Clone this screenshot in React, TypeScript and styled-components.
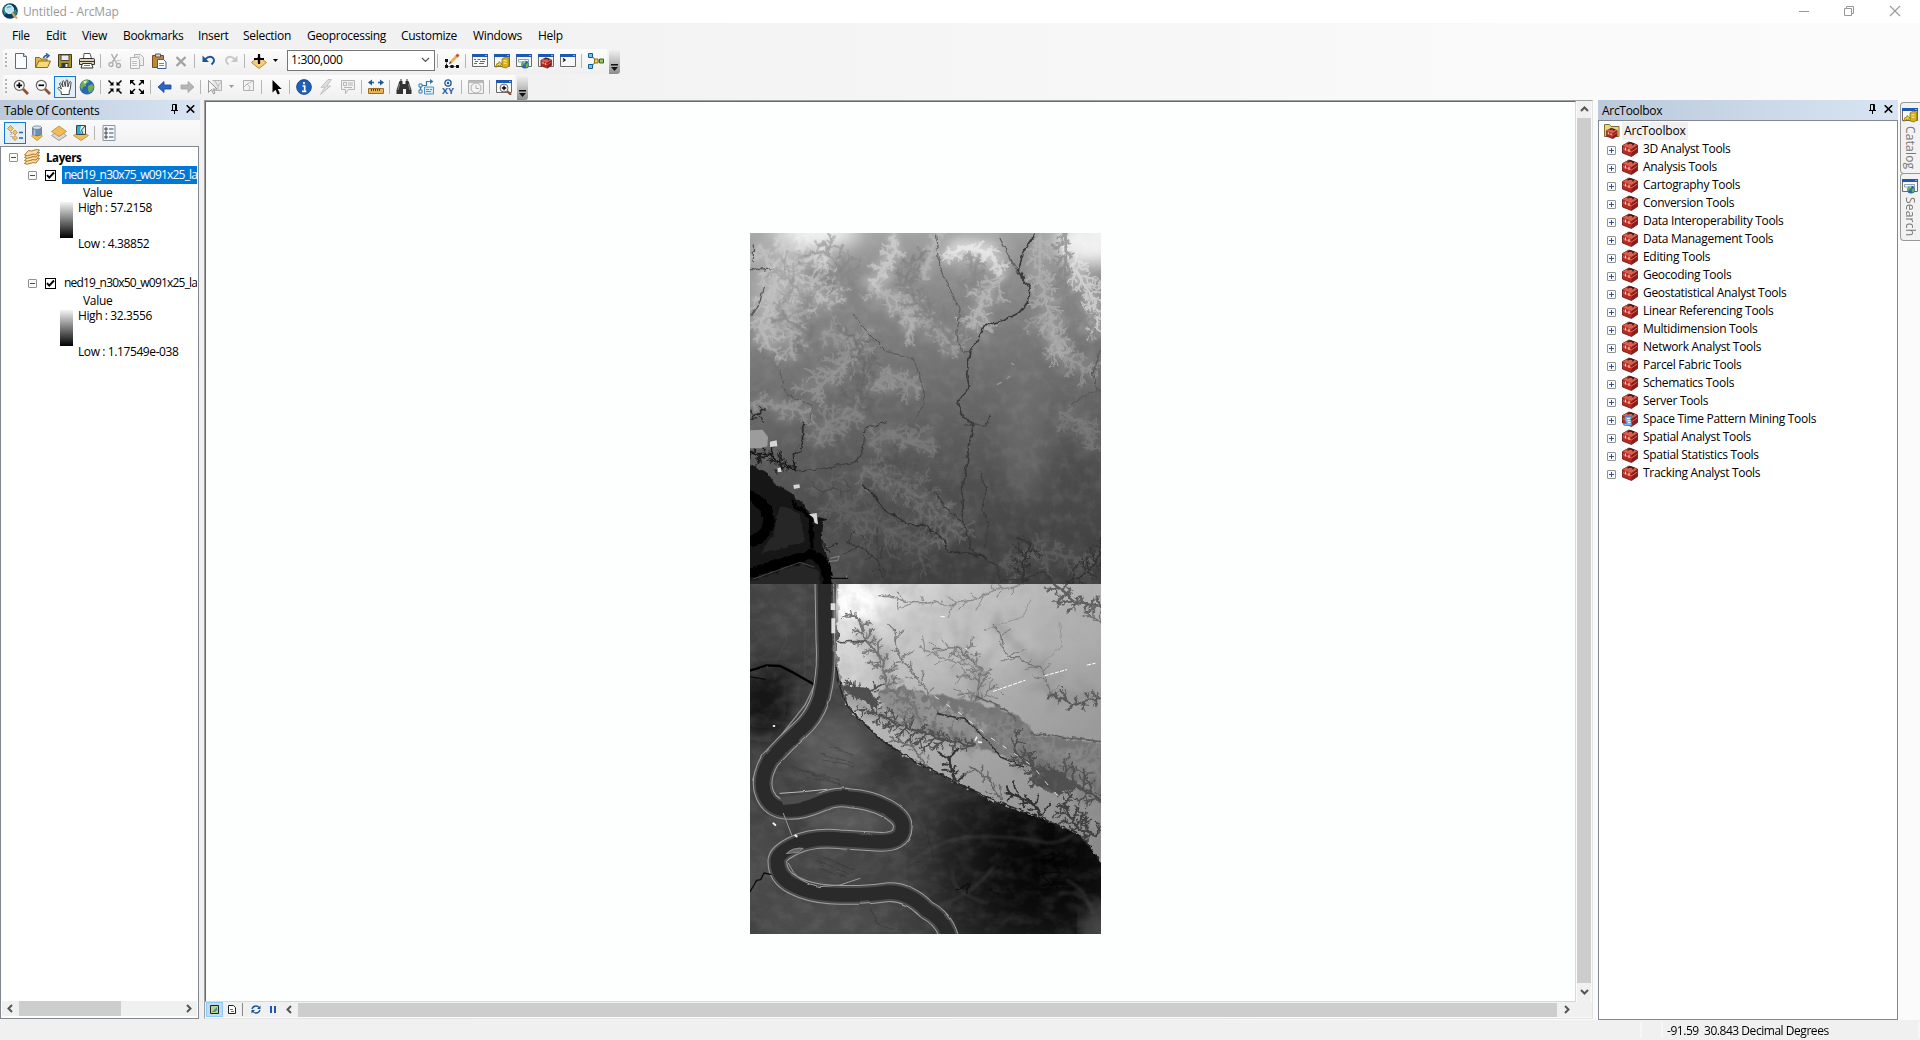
import React from "react";
import styled, { createGlobalStyle, css } from "styled-components";

const GlobalStyle = createGlobalStyle`
  html, body { margin: 0; padding: 0; }
  body { overflow: hidden; }
  * { box-sizing: border-box; }
  svg { display: block; flex: none; }
`;

const Window = styled.div`
  width: 1920px;
  height: 1040px;
  display: flex;
  flex-direction: column;
  background: linear-gradient(90deg, #f0f0f0 0, #f1f1f1 400px, #fafafa 1550px, #fbfbfb 100%);
  font-family: "Open Sans", "Noto Sans", sans-serif;
  font-size: 12px;
  letter-spacing: -0.3px;
  color: #000;
  white-space: pre;
  user-select: none;
`;

/* ---------- title bar and menu ---------- */

const TitleBar = styled.header`
  height: 23px;
  flex: none;
  display: flex;
  align-items: center;
  background: #fff;
  color: #999;
  padding: 0 15px 2px 2px;
`;
const TitleText = styled.span`
  flex: 1;
  padding: 1px 0 0 5px;
  letter-spacing: -0.13px;
`;
const WindowButtons = styled.div`
  display: flex;
  gap: 30px;
`;
const MenuBar = styled.nav`
  height: 26px;
  flex: none;
  display: flex;
  align-items: center;
  padding-left: 12px;
`;
const MenuItem = styled.span<{ $w: number }>`
  width: ${(p) => p.$w}px;
  line-height: 26px;
`;

/* ---------- toolbars ---------- */

const ToolbarRow = styled.div`
  height: 25px;
  flex: none;
  margin-bottom: 1px;
  display: flex;
  & + & { margin-bottom: 0; }
`;
const Toolbar = styled.div`
  display: flex;
  align-items: center;
  margin-left: 3px;
  padding-bottom: 2px;
  background: linear-gradient(180deg, #fcfcfc, #f3f3f3 70%, #efefef);
  border-radius: 3px 0 0 3px;
`;
const Grip = styled.i`
  width: 2px;
  height: 16px;
  margin: 0 3px 0 2px;
  background: repeating-linear-gradient(180deg, #b4b4b4 0 2px, transparent 2px 4px);
`;
const ToolButton = styled.span<{ $on?: boolean; $w?: number }>`
  width: ${(p) => p.$w ?? 22}px;
  height: 22px;
  display: flex;
  align-items: center;
  justify-content: center;
  ${(p) => p.$on && css`
    background: #e2eefa;
    border: 1px solid #0f7bd7;
  `}
`;
const Separator = styled.i`
  width: 6px;
  height: 14px;
  background: linear-gradient(#b5b5b5, #b5b5b5) 2px 0 / 1px 100% no-repeat;
`;
const Combo = styled.div`
  width: 148px;
  height: 21px;
  margin: -1px 0 0 7px;
  border: 1px solid #767676;
  background: #fff;
  display: flex;
  align-items: center;
  justify-content: space-between;
  padding: 0 4px 1px 3px;
`;
const Overflow = styled.span`
  width: 11px;
  height: 24px;
  margin: 1px 0 0 2px;
  display: flex;
  align-items: flex-end;
  justify-content: center;
  padding-bottom: 3px;
  background: linear-gradient(180deg, #f0f0f0, #c4c4c4 45%, #8c8c8c);
  border-radius: 0 0 3px 0;
`;

/* ---------- panels ---------- */

const Workspace = styled.main`
  flex: 1;
  min-height: 0;
  display: flex;
`;
const TocPanel = styled.section`
  width: 200px;
  display: flex;
  flex-direction: column;
`;
const PanelHeader = styled.div`
  height: 20px;
  flex: none;
  display: flex;
  align-items: center;
  gap: 8px;
  padding: 0 5px 2px 4px;
  background: linear-gradient(90deg, #bacadb, #d8e4f2);
`;
const PanelTitle = styled.span`
  flex: 1;
  padding-top: 3px;
`;
const TocTools = styled.div`
  height: 26px;
  flex: none;
  display: flex;
  align-items: center;
  padding-left: 4px;
  background: linear-gradient(180deg, #fafafa, #f0f0f0);
`;
const TocBox = styled.div`
  width: 199px;
  height: 873px;
  border: 1px solid #828790;
  background: #fff;
  display: flex;
  flex-direction: column;
  padding: 1px;
`;
const TocTree = styled.div`
  flex: 1;
  overflow: hidden;
`;
const TocRow = styled.div<{ $indent: number }>`
  height: 18px;
  display: flex;
  align-items: center;
  padding-left: ${(p) => p.$indent}px;
`;
const ExpandBox = styled.span`
  width: 9px;
  height: 9px;
  flex: none;
  border: 1px solid #919191;
  border-radius: 1px;
  background: #fafafa;
  display: flex;
`;
const LayersLabel = styled.b`
  padding-left: 1px;
  font-size: 11.5px;
  letter-spacing: -0.4px;
`;
const CheckBox = styled.span`
  width: 11px;
  height: 11px;
  flex: none;
  margin: 1px 6px 0 8px;
  border: 1px solid #000;
  background: #fff;
`;
const LayerName = styled.span<{ $selected?: boolean }>`
  flex: 1;
  height: 18px;
  line-height: 17px;
  padding-left: 2px;
  letter-spacing: -0.8px;
  color: ${(p) => (p.$selected ? "#fff" : "#000")};
  background: ${(p) => (p.$selected ? "#0078d7" : "transparent")};
`;
const LayerGroup = styled.div`
  height: 108px;
`;
const ValueLabel = styled.div`
  height: 17px;
  line-height: 17px;
  padding-left: 81px;
`;
const RampRow = styled.div`
  display: flex;
  gap: 5px;
  padding: 1px 0 0 58px;
`;
const Ramp = styled.span`
  width: 13px;
  height: 36px;
  background: linear-gradient(180deg, #f4f4f4, #000);
`;
const RampLabels = styled.div`
  height: 50px;
  display: flex;
  flex-direction: column;
  justify-content: space-between;
  line-height: 14px;
  margin-top: -1px;
  letter-spacing: -0.4px;
`;

/* ---------- scroll bars ---------- */

const ScrollH = styled.div<{ $h: number }>`
  height: ${(p) => p.$h}px;
  flex: none;
  display: flex;
  align-items: center;
  background: #f0f0f0;
  margin-bottom: 1px;
`;
const ScrollV = styled.div`
  width: 14px;
  display: flex;
  flex-direction: column;
  align-items: center;
  background: #f0f0f0;
`;
const Thumb = styled.span<{ $w?: number; $h?: number }>`
  width: ${(p) => (p.$w ? p.$w + "px" : "100%")};
  height: ${(p) => (p.$h ? p.$h + "px" : "100%")};
  background: #cdcdcd;
`;
const ScrollArrow = styled.span<{ $w: number; $h: number }>`
  width: ${(p) => p.$w}px;
  height: ${(p) => p.$h}px;
  flex: none;
  display: flex;
  align-items: center;
  justify-content: center;
`;
const Filler = styled.span`
  flex: 1;
`;

/* ---------- map view ---------- */

const MapFrame = styled.section`
  width: 1389px;
  height: 919px;
  margin-left: 4px;
  display: flex;
  flex-direction: column;
  border-left: 1px solid #a0a0a0;
  border-top: 1px solid #a0a0a0;
  border-right: 1px solid #e3e3e3;
  border-bottom: 1px solid #e3e3e3;
  background: #fbfbfb;
`;
const MapRow = styled.div`
  height: 901px;
  display: flex;
  gap: 1px;
`;
const MapCanvas = styled.div`
  width: 1371px;
  height: 901px;
  background: #fdfefe;
  border: 1px solid #696969;
  border-right-color: #d8d8d8;
  border-bottom-color: #d8d8d8;
  padding: 131px 0 0 544px;
`;
const MapFooter = styled.div`
  height: 15px;
  display: flex;
  align-items: center;
  background: #f0f0f0;
  padding-left: 1px;
`;
const ViewButton = styled.span<{ $on?: boolean }>`
  width: 17px;
  height: 15px;
  display: flex;
  align-items: center;
  justify-content: center;
  background: ${(p) => (p.$on ? "#bcdcf4" : "transparent")};
  border: 1px solid ${(p) => (p.$on ? "#90c8f6" : "transparent")};
`;
const FooterRule = styled.i`
  width: 1px;
  height: 13px;
  margin: 0 4px 0 2px;
  background: #888;
`;

/* ---------- ArcToolbox ---------- */

const ToolboxPanel = styled.section`
  width: 300px;
  height: 920px;
  margin-left: 5px;
  display: flex;
  flex-direction: column;
`;
const ToolboxTree = styled.div`
  flex: 1;
  border: 1px solid #828790;
  background: #fff;
  padding: 1px 0 0 5px;
`;
const ToolboxRoot = styled.div`
  height: 18px;
  display: flex;
  align-items: center;
  gap: 2px;
`;
const RootLabel = styled.span`
  height: 18px;
  line-height: 18px;
  padding: 0 2px;
  background: #f0f0f0;
  letter-spacing: -0.15px;
`;
const ToolRow = styled.div`
  height: 18px;
  display: flex;
  align-items: center;
  padding-left: 3px;
  & > ${ExpandBox} { margin: 3px 6px 0 0; }
`;
const ToolName = styled.span`
  padding-left: 5px;
  line-height: 18px;
`;

const DockStrip = styled.aside`
  width: 20px;
  margin-left: 2px;
  padding-top: 2px;
  display: flex;
  flex-direction: column;
`;
const DockTab = styled.div<{ $h: number }>`
  height: ${(p) => p.$h}px;
  border: 1px solid #999;
  border-right: 0;
  border-radius: 4px 0 0 4px;
  margin-bottom: -1px;
  background: #f2f2f2;
  display: flex;
  flex-direction: column;
  align-items: center;
  padding: 4px 2px 0 0;
  gap: 3px;
  color: #777;
`;
const DockLabel = styled.span`
  writing-mode: vertical-rl;
  line-height: 16px;
  letter-spacing: 0.2px;
`;

const StatusBar = styled.footer`
  height: 20px;
  flex: none;
  display: flex;
  align-items: stretch;
  background: #f0f0f0;
  padding: 2px 0;
`;
const StatusCell = styled.div<{ $w: number }>`
  width: ${(p) => p.$w}px;
  border-right: 2px solid #f7f7f7;
  line-height: 17px;
  padding-left: 4px;
  letter-spacing: -0.46px;
`;

/* ---------- icons ---------- */

const Icon = ({ size = 16, children }: { size?: number; children: React.ReactNode }) => (
  <svg width={size} height={size} viewBox="0 0 16 16" fill="none">{children}</svg>
);

const GlobeArt = () => (
  <>
    <circle cx="8" cy="8" r="7.4" fill="#2b66b5" />
    <path d="M2 5Q5 0 9 1L10 3 7 5 7 7 4 8 3 11Q0 8 2 5M9 7l4-2 2 3-2 4-3 2-1-4z" fill="#6fb04a" />
    <path d="M4 3Q6 1 8 2L6 5z" fill="#d9efb0" />
  </>
);
const LogoIcon = () => (
  <Icon>
    <circle cx="8" cy="8" r="7.8" fill="#0c3a5e" />
    <path d="M1 6Q3 1 8 1l2 3-5 2-1 5-2 1M10 9l4-3 1 4-4 5z" fill="#2b8a80" />
    <circle cx="7.4" cy="6.4" r="4.2" fill="#b9e4f2" stroke="#e8f6fb" />
    <path d="M5 5q2-2 4-1" stroke="#4fa6cc" strokeWidth="1.5" />
    <path d="M10 10l5 5.5" stroke="#d9a35e" strokeWidth="2" />
  </Icon>
);
const NewIcon = () => (
  <Icon>
    <path d="M2.500.5h8l3 3v12h-11z" fill="#fbfdff" stroke="#5f6b78" />
    <path d="M10.500.500v3h3" fill="#cfdcec" stroke="#5f6b78" />
  </Icon>
);
const OpenIcon = () => (
  <Icon>
    <path d="M.5 14.500v-10h4l1.500 1.500h6v3" fill="#e0b74a" stroke="#8a6a1d" />
    <path d="M.8 14.500l3-6.500h11.700l-3 6.500z" fill="#f8d978" stroke="#8a6a1d" />
    <path d="M8.500 5q1-3 4-2.500M11 .5l3 2-2.500 2.500" stroke="#1c5ea8" strokeWidth="1.500" />
  </Icon>
);
const SaveIcon = () => (
  <Icon>
    <path d="M1.500 1.500h13v13h-12l-1-1z" fill="#a8922c" stroke="#3c3823" />
    <path d="M4 2h8v5.500H4z" fill="#e8ecef" stroke="#4a4a3a" />
    <path d="M4.500 10h7v4.500h-7z" fill="#35383c" />
    <path d="M8.500 11h2v3h-2z" fill="#eee" />
  </Icon>
);
const PrintIcon = () => (
  <Icon>
    <path d="M4.500 5.500l.5-5h6l1.500 5z" fill="#fff" stroke="#555" />
    <path d="M.5 6.500q0-1 1-1h13q1 0 1 1v5h-15z" fill="#d8d2b8" stroke="#333" />
    <path d="M1 8.500h14" stroke="#333" />
    <path d="M3.500 10.500h9l1.500 4.500h-12z" fill="#fff" stroke="#333" />
    <path d="M5 12.500h6" stroke="#777" />
  </Icon>
);
const CutIcon = () => (
  <Icon>
    <path d="M4.500 1l5 9.500M10.500 1l-5 8" stroke="#b0b0b0" strokeWidth="1.500" />
    <circle cx="4" cy="11.500" r="2" stroke="#aaa" strokeWidth="1.300" />
    <circle cx="11.500" cy="12.500" r="2" stroke="#aaa" strokeWidth="1.300" />
    <path d="M8 8.500l6-1.500" stroke="#c4c4c4" />
  </Icon>
);
const CopyIcon = () => (
  <Icon>
    <path d="M5.500 1.500h6l3 3v8h-9z" fill="#efefef" stroke="#b0b0b0" />
    <path d="M1.500 4.500h7l2 2v9h-9z" fill="#f4f4f4" stroke="#b0b0b0" />
    <path d="M3 8.500h5M3 10.500h5M3 12.500h5M7 4h4" stroke="#c0c0c0" />
  </Icon>
);
const PasteIcon = () => (
  <Icon>
    <path d="M1.500 2.500h11v12h-11z" fill="#c4843a" stroke="#7c4b1c" />
    <path d="M4.500 1h5v3h-5z" fill="#d8d8d8" stroke="#555" />
    <path d="M6.500 6.500h6l2.500 2.500v6.500H6.500z" fill="#fff" stroke="#3c5f8e" />
    <path d="M8 10.500h5M8 12.500h5" stroke="#5e8cc4" />
  </Icon>
);
const DeleteIcon = () => (
  <Icon><path d="M3.500 4l9 9M12.500 4l-9 9" stroke="#a2a2a2" strokeWidth="2.400" /></Icon>
);
const UndoArt = ({ color }: { color: string }) => (
  <>
    <path d="M4 6.500Q8 2.500 11.500 4.500Q15 7.500 10.500 11.500" stroke={color} strokeWidth="1.900" />
    <path d="M1.500 2.500v6.500H8z" fill={color} />
  </>
);
const UndoIcon = () => <Icon><UndoArt color="#1a559c" /></Icon>;
const RedoIcon = () => <Icon><g transform="matrix(-1 0 0 1 16 0)"><UndoArt color="#c8c8c8" /></g></Icon>;
const AddDataIcon = () => (
  <Icon>
    <path d="M8 3.500l7.500 6L8 15.500.5 9.500z" fill="#f3cd7a" stroke="#b98a3a" />
    <path d="M8 1v10M3 6h10" stroke="#000" strokeWidth="2.200" />
  </Icon>
);
const Caret = ({ color = "#000" }: { color?: string }) => (
  <svg width="5" height="3" viewBox="0 0 5 3"><path d="M0 0h5L2.500 3z" fill={color} /></svg>
);
const EditorIcon = () => (
  <Icon>
    <path d="M2.500 7.500v6h11" stroke="#222" strokeDasharray="2 1" />
    <path d="M1 6h3v3H1zM1 12h3v3H1zM6.500 12h3v3h-3zM12 12h3v3h-3z" fill="#111" />
    <path d="M6.500 9.500l7-7" stroke="#e9b44d" strokeWidth="2.800" />
    <path d="M12.500 3.500l2-2" stroke="#d0473e" strokeWidth="2.800" />
    <path d="M5 11l1-2.500 1.500 1.500z" fill="#222" />
  </Icon>
);
const WindowArt = () => (
  <>
    <path d="M.5 1.500h15v12H.5z" fill="#f8f8f8" stroke="#6b6b6b" />
    <path d="M0 1h16v3H0z" fill="#1d58b5" />
    <path d="M13.500 2h1v1h-1z" fill="#fff" />
  </>
);
const TocWinIcon = () => (
  <Icon><WindowArt /><path d="M2 6.500h2M5.500 6.500h3M10 6.500h4M3 8.500h3M8 8.500h5M2 10.500h3M7 10.500h5" stroke="#2e79c5" /></Icon>
);
const CatalogIcon = () => (
  <Icon>
    <WindowArt />
    <path d="M8 6l3-2 4 1v8l-3 2-4-1z" fill="#d6b11f" stroke="#82690c" strokeWidth=".7" />
    <path d="M9.500 7.500l3 .5M9.500 10l3 .5" stroke="#fff2a0" />
    <path d="M2 13q0-3 3-3v-1.500l3 2.500-3 3v-1.500q-2 0-3 2z" fill="#efd233" stroke="#82690c" strokeWidth=".7" />
  </Icon>
);
const SearchWinIcon = () => (
  <Icon>
    <WindowArt />
    <path d="M2.500 6.500h10v2.500h-10z" fill="#fff" stroke="#8aa0bb" />
    <g transform="translate(5 7.500) scale(.52)"><GlobeArt /></g>
  </Icon>
);
const BoxArt = () => (
  <>
    <path d="M.5 4.500L7 1 15.500 4v7.500L9.500 15.500.5 12z" fill="#b92a22" stroke="#5e1512" strokeWidth=".8" />
    <path d="M.8 4.600L7 1.300 15.300 4.100 9.500 8z" fill="#d9604f" />
    <path d="M9.500 8v7.300l5.800-4.300V4.400z" fill="#8d1c19" />
    <path d="M5.500 3.200L8 1.700l3.500 1.200-1 1.500" stroke="#222" strokeWidth="1.500" />
    <path d="M1 7.600l8.500 3.300 5.800-3.900" stroke="#e88d7e" strokeWidth=".7" />
    <path d="M3.500 6.500v3M7 7.800v3" stroke="#f1e4dc" strokeWidth="1.100" />
  </>
);
const ToolboxIcon = ({ scroll }: { scroll?: boolean }) => (
  <Icon>
    <BoxArt />
    {scroll && <path d="M3 5.500h7l-1.500 3 1.500 6H3.500Q1 14.500 1.500 12.500h3L3 8.500z" fill="#79b6ee" stroke="#3b7fc9" strokeWidth=".8" />}
    {scroll && <path d="M5 7.500h3M5.500 9.500h3M6 11.500h2.500" stroke="#e8f4ff" />}
  </Icon>
);
const ToolboxWinIcon = () => <Icon><WindowArt /><g transform="translate(2.500 4) scale(.72)"><BoxArt /></g></Icon>;
const FolderBoxIcon = () => (
  <Icon>
    <path d="M.5 13.500v-12h5l1.500 2h8v10z" fill="#f0d67a" stroke="#7c7038" />
    <g transform="translate(2 4.500) scale(.72)"><BoxArt /></g>
  </Icon>
);
const PythonIcon = () => <Icon><WindowArt /><path d="M3 5.500l2 1.500-2 1.500" stroke="#111" strokeWidth="1.300" /></Icon>;
const ModelIcon = () => (
  <Icon>
    <path d="M4 3l4 5-4 5M6 8h6" stroke="#555" />
    <path d="M.5.5h4v4h-4zM.5 11.500h4v4h-4z" fill="#74c3ee" stroke="#0f5c92" />
    <path d="M6.500 6h3.500v4H6.500z" fill="#f0cf4a" stroke="#8c6c11" />
    <path d="M11.500 6h4v4h-4z" fill="#8cc866" stroke="#2c6d1a" />
  </Icon>
);
const LensArt = ({ plus }: { plus?: boolean }) => (
  <>
    <path d="M10 10l5 5" stroke="#984c28" strokeWidth="2.600" />
    <circle cx="6.300" cy="6.300" r="5" fill="#fafafa" stroke="#666" strokeWidth="1.200" />
    <path d={plus ? "M3.500 6.300h5.600M6.300 3.500v5.600" : "M3.500 6.300h5.600"} stroke="#000" strokeWidth="1.700" />
  </>
);
const ZoomInIcon = () => <Icon><LensArt plus /></Icon>;
const ZoomOutIcon = () => <Icon><LensArt /></Icon>;
const HandIcon = () => (
  <Icon>
    <path d="M4.500 15.500L4 12.500 1 9.500q0-1.500 1.500-1l2 1.500-2-5.500q.5-1.500 1.700 0L6 8 5.300 2.500q1-1.500 1.800 0L8.300 7.500 9 1.500q1-1.200 1.700 0L10.800 8l1.700-5q1.200-1 1.600.3L13.200 10l-1 3v2.500z" fill="#fff" stroke="#333" strokeWidth=".9" />
  </Icon>
);
const GlobeIcon = () => <Icon><GlobeArt /></Icon>;
const FixedInIcon = () => (
  <Icon>
    <path d="M1.500 1.500l4 4M14.500 1.500l-4 4M1.500 14.500l4-4M14.500 14.500l-4-4" stroke="#000" strokeWidth="1.500" />
    <path d="M6.500 2.500v4H2.500zM9.500 2.500v4h4zM6.500 13.500v-4H2.500zM9.500 13.500v-4h4z" fill="#000" />
  </Icon>
);
const FixedOutIcon = () => (
  <Icon>
    <path d="M2 2l4 4M14 2l-4 4M2 14l4-4M14 14l-4-4" stroke="#000" strokeWidth="1.500" />
    <path d="M1 5.500V1h4.500zM15 5.500V1h-4.500zM1 10.500V15h4.500zM15 10.500V15h-4.500z" fill="#000" />
  </Icon>
);
const ArrowIcon = ({ right }: { right?: boolean }) => (
  <Icon>
    <path d={right ? "M15 8L9 2.500v3.500H2v4h7v3.500z" : "M1 8l6-5.500v3.500h7v4H7v3.500z"} fill={right ? "#b5b5b5" : "#2c66c9"} stroke={right ? "#a5a5a5" : "#173f8f"} strokeWidth=".8" />
  </Icon>
);
const SelectFeatIcon = () => (
  <Icon>
    <path d="M5.500 1.500h9v10H6" fill="#e7e7e7" stroke="#b5b5b5" />
    <path d="M8 2l3 5 3-4M11 7v4" stroke="#bbb" />
    <path d="M1.500 1.500v12l3-3 2 4.500 1.500-1-2-4h4z" fill="#f5f5f5" stroke="#999" />
  </Icon>
);
const ClearSelIcon = () => (
  <Icon><path d="M3.500 1.500h10v10h-10z" fill="#f3f3f3" stroke="#b0b0b0" /><path d="M4 8l3-3 6-3M7 5l3 3-1 3" stroke="#bbb" /></Icon>
);
const PointerIcon = () => <Icon><path d="M4.500 1v12.500l3-2.800 2.200 4.800 2.200-1-2.200-4.500h4z" fill="#000" /></Icon>;
const IdentifyIcon = () => (
  <Icon>
    <circle cx="8" cy="8" r="7.400" fill="#1e5fb8" stroke="#123f82" strokeWidth=".8" />
    <path d="M8 3v2.200M6.500 7H8.700v5M6 12.300h4.300" stroke="#fff" strokeWidth="1.700" />
  </Icon>
);
const BoltIcon = () => <Icon><path d="M10 .5L3 8.500l4-.5-4.500 7.500 10-8.500-4 .5 5-7z" fill="#dedede" stroke="#b8b8b8" strokeWidth=".8" /></Icon>;
const PopupIcon = () => (
  <Icon>
    <path d="M1.500 1.500h13v9h-6l-3 4v-4h-4z" fill="#f2f2f2" stroke="#b5b5b5" />
    <path d="M3.500 3.500h3v3h-3zM8 4h5M8 6h5M4 8.500h8" stroke="#b5b5b5" />
  </Icon>
);
const MeasureIcon = () => (
  <Icon>
    <path d="M1 3.500h5M10 3.500h5" stroke="#1f5a9d" strokeWidth="1.500" />
    <path d="M0 3.500L4 .5v6zM16 3.500l-4-3v6z" fill="#1f5a9d" />
    <path d="M.5 9.500h15v5H.5z" fill="#e7b45c" stroke="#9b6c26" />
    <path d="M3.500 10v2M5.500 10v2M7.500 10v2M9.500 10v2M11.500 10v2" stroke="#5d3d0e" />
  </Icon>
);
const FindIcon = () => (
  <Icon>
    <path d="M3.500 2h3v3h3V2h3l3 9v4h-5.500v-5h-3v5H.5v-4z" fill="#333" />
    <path d="M3.500 5L2 11M12.500 5l1.500 6" stroke="#8a8a8a" />
    <path d="M4 1h2M10 1h2" stroke="#333" />
  </Icon>
);
const RouteIcon = () => (
  <Icon>
    <path d="M2.500 12.500v-6h6v-4h5" stroke="#2e79b0" strokeWidth="1.200" />
    <path d="M12 0l3.500 2.500-3.500 2.500z" fill="#2e79b0" />
    <path d="M1 5h3v3H1zM1 11h3v3H1z" fill="#fff" stroke="#2e79b0" />
    <path d="M6.500 8h9v7h-9z" fill="#d9ecf8" stroke="#4d94c4" />
    <path d="M8 10.500h3M12 10.500h2M8 12.500h5" stroke="#4d94c4" />
  </Icon>
);
const XyGlyph = styled.span`
  display: flex;
  flex-direction: column;
  align-items: center;
  font: 700 9px/8px "Open Sans", sans-serif;
  letter-spacing: 0.3px;
  color: #1f5a9d;
`;
const XyIcon = () => (
  <XyGlyph>
    <svg width="8" height="8" viewBox="0 0 8 8" fill="none"><circle cx="4" cy="4" r="3.100" stroke="#1f5a9d" strokeWidth="1.300" /><circle cx="4" cy="4" r="1.200" fill="#1f5a9d" /></svg>
    XY
  </XyGlyph>
);
const TimeIcon = () => (
  <Icon>
    <path d="M.5 1.500h15v13H.5z" fill="#efefef" stroke="#b0b0b0" /><path d="M1 3h14" stroke="#bbb" strokeWidth="2" />
    <circle cx="8" cy="9" r="5" fill="#f4f4f4" stroke="#b0b0b0" /><path d="M8 6v3.500h3" stroke="#b0b0b0" />
  </Icon>
);
const ViewerIcon = () => <Icon><WindowArt /><g transform="translate(3 4) scale(.8)"><LensArt plus /></g></Icon>;
const OverflowGlyph = () => (
  <svg width="7" height="7" viewBox="0 0 7 7"><path d="M0 0h7v1.500H0zM0 3h7L3.500 7z" fill="#111" /></svg>
);
const ListOrderIcon = () => (
  <Icon>
    <path d="M4 3v9h4M4 8h4" stroke="#888" strokeDasharray="1 1" />
    <path d="M3.500.5L6.500 3.500 3.500 6.500.5 3.500zM8 5l2.500 2.500L8 10 5.500 7.500zM8 10.500l2.500 2.500L8 15.500 5.500 13z" fill="#f3c56a" stroke="#c08b2f" strokeWidth=".8" />
    <path d="M12 7.500h4M12 13h4" stroke="#2c5fa5" strokeWidth="1.500" />
  </Icon>
);
const SourceIcon = () => (
  <Icon>
    <path d="M8 7l5.500 4L8 15.500 2.500 11z" fill="#f3c04e" stroke="#b98a2a" strokeWidth=".8" />
    <path d="M3.500 2.500v7q4.500 3 9 0v-7z" fill="#6f8db5" stroke="#4e607a" strokeWidth=".6" />
    <ellipse cx="8" cy="2.600" rx="4.500" ry="1.800" fill="#d4e0ef" stroke="#4e607a" strokeWidth=".6" />
    <path d="M5.500 4.500v6" stroke="#b7c9e0" strokeWidth="1.500" />
  </Icon>
);
const VisibleIcon = () => (
  <Icon>
    <path d="M8 5.500l7.500 5L8 15.500.5 10.500z" fill="#d9d9d9" stroke="#8d8d8d" strokeWidth=".8" />
    <path d="M8 1l7.500 5.500L8 11.500.5 6.500z" fill="#f1bd5c" stroke="#b98a2a" strokeWidth=".8" />
  </Icon>
);
const SelectedIcon = () => (
  <Icon>
    <path d="M8 6l7.500 4.500L8 15.500.5 10.500z" fill="#f1bd5c" stroke="#b98a2a" strokeWidth=".8" />
    <path d="M3.500.5h9v9h-9z" fill="#e9e9e9" stroke="#444" />
    <path d="M4 1h4l-1 4 2 4H4z" fill="#17b8d3" /><path d="M12 1L8.500 5 10 9" stroke="#444" />
  </Icon>
);
const OptionsIcon = () => (
  <Icon>
    <path d="M2 .5h12v15H2z" fill="#f4f7fb" stroke="#8896aa" />
    <path d="M4 3h2v2H4zM4 7h2v2H4zM4 11h2v2H4z" stroke="#222" strokeWidth=".8" />
    <path d="M8 4h4.500M8 8h4.500M8 12h4.500" stroke="#3a4a60" />
  </Icon>
);
const LayersIcon = () => (
  <Icon>
    {[10, 7, 4, 1.5].map((y) => (
      <path key={y} d={`M4.500 ${y}q3 1.500 6-.5 3-1 5 0l-3.500 4.500q-3-1-6 .5t-5.500 0z`} fill="#fbdfa6" stroke="#a66a1a" strokeWidth=".9" />
    ))}
  </Icon>
);
const PinIcon = () => (
  <svg width="7" height="10" viewBox="0 0 7 10" fill="none"><path d="M1.500 6V.5h4V6M4.500 1v5M0 6.500h7M3.500 7v3" stroke="#000" /></svg>
);
const CloseIcon = () => (
  <svg width="9" height="8" viewBox="0 0 9 8" fill="none"><path d="M.7 .3l7.500 7.300M8.200 .3L.7 7.600" stroke="#000" strokeWidth="1.600" /></svg>
);
const MinusGlyph = ({ plus }: { plus?: boolean }) => (
  <svg width="7" height="7" viewBox="0 0 7 7"><path d={plus ? "M1 3h5v1H1zM3 1h1v5H3z" : "M1 3h5v1H1z"} fill="#2f4f9e" /></svg>
);
const CheckGlyph = () => (
  <svg width="9" height="9" viewBox="0 0 9 9" fill="none"><path d="M1 4.200l2.300 2.500L8 1.500" stroke="#000" strokeWidth="1.900" /></svg>
);
const chevrons = { left: "M6 1L2.500 4.500 6 8", right: "M3 1l3.500 3.500L3 8", up: "M1 6l3.500-3.500L8 6", down: "M1 3l3.500 3.500L8 3" };
const Chevron = ({ dir, color = "#555", w = 2 }: { dir: keyof typeof chevrons; color?: string; w?: number }) => (
  <svg width="9" height="9" viewBox="0 0 9 9" fill="none"><path d={chevrons[dir]} stroke={color} strokeWidth={w} /></svg>
);

/* ---------- elevation rasters ---------- */

type Pt = [number, number];

function rng(seed: number) {
  let s = (seed * 7919) % 4294967296;
  return () => {
    s = (s * 1664525 + 1013904223) % 4294967296;
    return s / 4294967296;
  };
}

/* Grows tapering side branches off a spine; returns one path per branch order. */
function dendrite(spine: Pt[], len: number, step: number, seed: number, depth: number): string[] {
  const r = rng(seed);
  const out: string[] = ["", "", "", ""];
  const grow = (x: number, y: number, a: number, l: number, order: number) => {
    let p = `M${x.toFixed(1)} ${y.toFixed(1)}`;
    const n = 5;
    let side = r() < 0.5 ? -1 : 1;
    for (let i = 0; i < n; i++) {
      a += (r() - 0.5) * 0.75;
      x += (Math.cos(a) * l) / n;
      y += (Math.sin(a) * l) / n;
      p += `L${x.toFixed(1)} ${y.toFixed(1)}`;
      if (order < depth && i < n - 1) {
        grow(x, y, a + side * (0.6 + r() * 0.4), l * (0.3 + r() * 0.2), order + 1);
        side = -side;
      }
    }
    out[order] += p;
  };
  let side = 1;
  const main: string[] = [];
  for (let i = 1; i < spine.length; i++) {
    const [x0, y0] = spine[i - 1];
    const [x1, y1] = spine[i];
    const dist = Math.hypot(x1 - x0, y1 - y0);
    const a = Math.atan2(y1 - y0, x1 - x0);
    for (let t = 0; t < dist; t += step) {
      const k = t / dist;
      const j = (r() - 0.5) * step * 0.45;
      const x = x0 + (x1 - x0) * k - Math.sin(a) * j;
      const y = y0 + (y1 - y0) * k + Math.cos(a) * j;
      main.push(`${x.toFixed(1)} ${y.toFixed(1)}`);
      grow(x, y, a + side * (0.75 + r() * 0.5), len * (0.35 + r() * 0.75), 1);
      side = -side;
    }
  }
  const end = spine[spine.length - 1];
  main.push(end.join(" "));
  out[0] = "M" + main.join("L");
  return out;
}

type DendriteProps = { s: Pt[]; len: number; step?: number; seed: number; c: string; w: number; o?: number; depth?: number };
const Dendrite = ({ s, len, step = 18, seed, c, w, o = 1, depth = 2 }: DendriteProps) => (
  <g stroke={c} opacity={o}>
    {dendrite(s, len, step, seed, depth).map((d, i) => d && <path key={i} d={d} strokeWidth={w * [1, 0.72, 0.5, 0.4][i]} />)}
  </g>
);

const ridges: { s: Pt[]; len: number; c: string; o: number }[] = [
  { s: [[120, 30], [140, 110], [190, 180], [280, 235]], len: 75, c: "#d8d8d8", o: 0.6 },
  { s: [[60, 60], [110, 180], [60, 310], [90, 370]], len: 65, c: "#cccccc", o: 0.6 },
  { s: [[120, 200], [160, 290], [150, 390]], len: 65, c: "#bebebe", o: 0.55 },
  { s: [[180, 24], [250, 80], [260, 130]], len: 60, c: "#f4f4f4", o: 0.5 },
  { s: [[460, 30], [460, 90], [430, 130], [400, 180]], len: 50, c: "#e2e2e2", o: 0.6 },
  { s: [[390, 180], [480, 230], [520, 310]], len: 65, c: "#c2c2c2", o: 0.7 },
  { s: [[480, 200], [560, 290], [650, 370]], len: 60, c: "#acacac", o: 0.65 },
  { s: [[610, 90], [680, 65], [750, 85], [785, 145]], len: 40, c: "#ffffff", o: 0.55 },
  { s: [[790, 160], [730, 200], [700, 310]], len: 60, c: "#c8c8c8", o: 0.65 },
  { s: [[545, 160], [575, 90], [590, 30]], len: 26, c: "#cacaca", o: 0.5 },
  { s: [[900, 30], [900, 170], [930, 270], [960, 390]], len: 52, c: "#bababa", o: 0.65 },
  { s: [[1030, 30], [1000, 130], [1060, 220], [1075, 320]], len: 60, c: "#f0f0f0", o: 0.6 },
  { s: [[900, 270], [960, 390], [1055, 440]], len: 60, c: "#a8a8a8", o: 0.6 },
  { s: [[250, 320], [370, 350], [310, 420], [220, 500]], len: 62, c: "#a8a8a8", o: 0.5 },
  { s: [[380, 490], [450, 450], [540, 490]], len: 55, c: "#a0a0a0", o: 0.6 },
  { s: [[40, 530], [120, 545], [210, 560]], len: 45, c: "#a8a8a8", o: 0.55 },
  { s: [[230, 660], [260, 590], [360, 565]], len: 60, c: "#969696", o: 0.55 },
  { s: [[390, 660], [450, 620], [500, 650], [580, 650]], len: 60, c: "#8a8a8a", o: 0.55 },
  { s: [[370, 730], [450, 760], [560, 830], [640, 920]], len: 80, c: "#7e7e7e", o: 0.55 },
  { s: [[240, 760], [300, 850], [420, 900], [560, 980]], len: 90, c: "#707070", o: 0.45 },
  { s: [[960, 560], [1030, 600], [1060, 670]], len: 50, c: "#888", o: 0.55 },
  { s: [[780, 1020], [900, 980], [1060, 1010]], len: 60, c: "#6a6a6a", o: 0.5 },
];

const Wiggle = ({ id, scale, freq, blur = 0 }: { id: string; scale: number; freq: number; blur?: number }) => (
  <filter id={id} x="-5%" y="-5%" width="110%" height="110%">
    <feTurbulence type="fractalNoise" baseFrequency={freq} numOctaves={3} seed={7} result="n" />
    <feDisplacementMap in="SourceGraphic" in2="n" scale={scale} xChannelSelector="R" yChannelSelector="G" />
    {blur > 0 && <feGaussianBlur stdDeviation={blur} />}
  </filter>
);

const NorthRaster = () => (
  <svg width="351" height="351" viewBox="30 24 1053 1053" preserveAspectRatio="none" fill="none" strokeLinejoin="round" strokeLinecap="round">
    <defs>
      <linearGradient id="nBase" x1="0" y1="0" x2="0.08" y2="1">
        <stop offset="0" stopColor="#aaaaaa" /><stop offset=".1" stopColor="#969696" /><stop offset=".3" stopColor="#7f7f7f" />
        <stop offset=".5" stopColor="#6a6a6a" /><stop offset=".75" stopColor="#515151" /><stop offset="1" stopColor="#404040" />
      </linearGradient>
      <filter id="nSoft" x="-20%" y="-20%" width="140%" height="140%"><feGaussianBlur stdDeviation="28" /></filter>
      <filter id="nGlow" x="-10%" y="-10%" width="120%" height="120%"><feGaussianBlur stdDeviation="11" /></filter>
      <filter id="nGrain" x="0" y="0" width="100%" height="100%">
        <feTurbulence type="fractalNoise" baseFrequency=".03" numOctaves="5" seed="12" />
        <feColorMatrix values="0 0 0 0 .62  0 0 0 0 .62  0 0 0 0 .62  2.200 0 0 0 -.9" />
      </filter>
      <Wiggle id="nRidge" scale={14} freq={0.05} blur={1.8} />
      <Wiggle id="nLine" scale={16} freq={0.05} blur={0.8} />
    </defs>
    <rect x="30" y="24" width="1053" height="1053" fill="url(#nBase)" />
    <g filter="url(#nSoft)">
      <ellipse cx="230" cy="25" rx="130" ry="38" fill="#fff" />
      <ellipse cx="1060" cy="50" rx="120" ry="70" fill="#f4f4f4" />
      <ellipse cx="700" cy="75" rx="90" ry="34" fill="#fff" opacity=".6" />
      <ellipse cx="100" cy="210" rx="80" ry="130" fill="#b8b8b8" opacity=".6" />
      <ellipse cx="300" cy="190" rx="60" ry="60" fill="#7d7d7d" opacity=".5" />
      <ellipse cx="850" cy="600" rx="60" ry="230" fill="#757575" opacity=".5" />
      <ellipse cx="1010" cy="800" rx="60" ry="150" fill="#484848" opacity=".5" />
      <ellipse cx="600" cy="690" rx="100" ry="50" fill="#5a5a5a" opacity=".7" />
      <ellipse cx="220" cy="990" rx="200" ry="80" fill="#555" opacity=".7" />
    </g>
    <g filter="url(#nGlow)">
      {ridges.map((g, i) => (
        <Dendrite key={i} s={g.s} len={g.len * 0.9} step={20} seed={31 + i * 17} c={g.c} w={24} o={g.o * 0.6} depth={1} />
      ))}
    </g>
    <g filter="url(#nRidge)">
      {ridges.map((g, i) => (
        <Dendrite key={i} s={g.s} len={g.len} step={15} seed={31 + i * 17} c={g.c} w={9} o={g.o * 0.85} />
      ))}
      <Dendrite s={[[980, 20], [975, 200], [1010, 270], [1083, 330]]} len={45} seed={5} c="#858585" w={9} o={0.7} />
      <Dendrite s={[[360, 560], [375, 420], [340, 330]]} len={70} seed={15} c="#606060" w={8} o={0.55} />
      <Dendrite s={[[660, 370], [570, 270], [490, 190], [520, 90]]} len={50} seed={25} c="#7c7c7c" w={8} o={0.7} />
      <Dendrite s={[[340, 260], [300, 140], [250, 50]]} len={70} seed={35} c="#858585" w={9} o={0.6} />
      <Dendrite s={[[650, 240], [700, 170], [720, 90]]} len={50} seed={41} c="#858585" w={8} o={0.6} />
      <Dendrite s={[[340, 260], [220, 240], [110, 130]]} len={60} seed={45} c="#8c8c8c" w={8} o={0.5} />
      <Dendrite s={[[200, 400], [210, 330], [120, 270]]} len={50} seed={47} c="#757575" w={8} o={0.5} />
      <Dendrite s={[[620, 900], [560, 800], [440, 700]]} len={60} seed={49} c="#505050" w={7} o={0.5} />
    </g>
    <rect x="30" y="24" width="1053" height="1053" filter="url(#nGrain)" opacity=".1" />
    <g filter="url(#nLine)">
      <path d="M885 30L850 80 835 140 870 190 865 230 835 265 780 290 735 300 710 350 690 380 680 450 688 485 655 530 665 570 700 600 690 650 680 730 665 790 670 850 665 890 690 940 690 970 730 1000 770 1020 780 1070 860 1060 910 1040 940 1075" stroke="#383838" strokeWidth="5" />
      <path d="M590 30L600 130 640 220 660 250 650 330 665 380 690 380M780 40L815 110 835 140" stroke="#5d5d5d" strokeWidth="3.500" />
      <path d="M340 270L390 330 440 380 520 400 550 490 550 540 525 585M120 440L140 510 215 540 210 590 185 610 190 640 160 690 165 735" stroke="#505050" strokeWidth="2.500" />
      <path d="M190 590L185 680 160 690 165 740" stroke="#2a2a2a" strokeWidth="4.500" />
      <path d="M165 740L250 730 350 710 370 670 375 610 440 590" stroke="#3b3b3b" strokeWidth="3" />
      <Dendrite s={[[165, 735], [120, 715], [90, 690], [30, 680]]} len={38} step={14} seed={8} c="#181818" w={5} />
      <path d="M370 780L410 820 440 860 500 895 560 905 610 945 625 980 690 985 740 1000" stroke="#2e2e2e" strokeWidth="4.500" />
      <path d="M720 740L740 790 725 850 745 890 735 970M585 800L620 850 660 885" stroke="#3c3c3c" strokeWidth="3.500" />
      <path d="M30 130L70 135 100 130M70 190L60 230 35 270M40 60V110" stroke="#5a5a5a" strokeWidth="4" />
      <Dendrite s={[[850, 1070], [850, 1010], [870, 950]]} len={50} seed={70} c="#333" w={5} />
      <Dendrite s={[[980, 1070], [1050, 1040], [1083, 970]]} len={55} seed={75} c="#333" w={5} />
      <Dendrite s={[[430, 1060], [400, 990], [320, 950]]} len={50} step={26} seed={91} c="#363636" w={4} depth={1} />
      <Dendrite s={[[330, 800], [230, 790]]} len={42} step={24} seed={93} c="#484848" w={4} depth={1} />
      <Dendrite s={[[30, 580], [75, 555]]} len={34} step={14} seed={95} c="#2a2a2a" w={5} depth={1} />
      <path d="M1083 370L1060 440 1070 490 1083 500M1070 500L1020 520 990 540" stroke="#5a5a5a" strokeWidth="4" />
      <path d="M245 945l15 25 32-15M260 970l10 15" stroke="#222" strokeWidth="3.500" />
      <path d="M670 600H740L750 570M410 900L415 1000" stroke="#3f3f3f" strokeWidth="3" />
    </g>
    <g filter="url(#nLine)">
      <path d="M24 714L78 740 115 782 160 808 205 858 250 892 245 945 260 988 280 1090H24z" fill="#191919" />
      <path d="M118 850Q150 840 178 868L195 950 60 985 100 930z" fill="#282828" />
      <path d="M24 810Q88 840 86 888T24 952" stroke="#000" strokeWidth="34" strokeLinecap="butt" />
      <path d="M24 1045L148 1008 208 990Q248 993 258 1038L264 1090" stroke="#000" strokeWidth="30" strokeLinecap="butt" />
      <path d="M158 833L213 878 215 968" stroke="#000" strokeWidth="12" />
      <path d="M24 1070L188 1018 238 1040V1090H24z" fill="#262626" />
    </g>
    <path d="M40 1062L180 1012 222 1026" stroke="#606060" strokeWidth="2" />
    <path d="M30 616l38-2 16 22-2 28-20 6H30z" fill="#9c9c9c" />
    <path d="M90 650l20-4 2 18-22 2zM112 730l10-3 3 14h-12zM160 780l18-2 2 10-18 4zM207 868l23-4 4 34-10-4-4-16z" fill="#d6d6d6" />
    <path d="M236 878l24 6-22 4z" fill="#111" stroke="#111" strokeWidth="3" />
    <path d="M772 478l12-6M802 460l8-6M815 415l6 4" stroke="#989898" strokeWidth="4" />
    <path d="M272 1000l26-7-6 14-24 2M320 1052v6" stroke="#a0a0a0" strokeWidth="2" />
    <path d="M272 1060h50" stroke="#0c0c0c" strokeWidth="4" />
  </svg>
);

const RIVER =
  "M253 5L256 180Q262 270 243 350Q225 410 180 450T90 540Q55 600 75 645T150 690Q190 690 240 668T330 655Q390 658 440 685T488 740Q490 790 410 785L300 778Q220 770 165 795T112 845Q112 890 160 915T270 943Q360 948 430 938T560 990Q610 1015 627 1070";

const SouthRaster = () => (
  <svg width="351" height="350" viewBox="30 12 1053 1050" preserveAspectRatio="none" fill="none" strokeLinejoin="round" strokeLinecap="round">
    <defs>
      <linearGradient id="sUp" x1="0" y1="0" x2=".75" y2="1">
        <stop offset="0" stopColor="#f0f0f0" /><stop offset=".25" stopColor="#c6c6c6" /><stop offset=".6" stopColor="#a8a8a8" /><stop offset="1" stopColor="#8a8a8a" />
      </linearGradient>
      <radialGradient id="sBasin" gradientUnits="userSpaceOnUse" cx="930" cy="850" r="480">
        <stop offset="0" stopColor="#020202" /><stop offset=".35" stopColor="#0b0b0b" stopOpacity=".95" /><stop offset=".65" stopColor="#161616" stopOpacity=".7" /><stop offset="1" stopColor="#303030" stopOpacity="0" />
      </radialGradient>
      <filter id="sSoft" x="-30%" y="-30%" width="160%" height="160%"><feGaussianBlur stdDeviation="30" /></filter>
      <filter id="sMid" x="-10%" y="-10%" width="120%" height="120%"><feGaussianBlur stdDeviation="4" /></filter>
      <filter id="sGlow" x="-10%" y="-10%" width="120%" height="120%"><feGaussianBlur stdDeviation="9" /></filter>
      <filter id="sGrain" x="0" y="0" width="100%" height="100%">
        <feTurbulence type="fractalNoise" baseFrequency=".02 .03" numOctaves="5" seed="22" />
        <feColorMatrix values="0 0 0 0 .5  0 0 0 0 .5  0 0 0 0 .5  2.500 0 0 0 -1" />
      </filter>
      <filter id="sShade" x="0" y="0" width="100%" height="100%">
        <feTurbulence type="fractalNoise" baseFrequency=".02" numOctaves="5" seed="5" />
        <feColorMatrix values="0 0 0 0 .38  0 0 0 0 .38  0 0 0 0 .38  3 0 0 0 -1.300" />
      </filter>
      <Wiggle id="sEdge" scale={24} freq={0.04} />
      <Wiggle id="sLine" scale={14} freq={0.05} blur={1} />
      <Wiggle id="sBank" scale={6} freq={0.02} />
      <clipPath id="sHigh"><path d="M288 0H1083V850L1010 755 890 705 780 665 650 605 540 550 430 480 350 410 315 370 298 310 285 240z" /></clipPath>
    </defs>
    <rect x="30" y="12" width="1053" height="1050" fill="#424242" />
    <g filter="url(#sSoft)">
      <ellipse cx="140" cy="80" rx="70" ry="90" fill="#474747" />
      <ellipse cx="70" cy="370" rx="90" ry="100" fill="#171717" />
      <ellipse cx="130" cy="270" rx="90" ry="20" fill="#202020" />
      <ellipse cx="280" cy="510" rx="110" ry="110" fill="#5a5a5a" />
      <ellipse cx="470" cy="560" rx="70" ry="50" fill="#303030" />
      <ellipse cx="330" cy="725" rx="110" ry="30" fill="#646464" />
      <ellipse cx="270" cy="860" rx="140" ry="40" fill="#4a4a4a" />
      <ellipse cx="250" cy="1020" rx="200" ry="60" fill="#4e4e4e" />
      <ellipse cx="60" cy="860" rx="50" ry="140" fill="#4c4c4c" />
      <ellipse cx="560" cy="700" rx="60" ry="80" fill="#404040" />
    </g>
    <rect x="500" y="400" width="583" height="662" fill="url(#sBasin)" />
    <ellipse cx="1075" cy="1040" rx="40" ry="60" fill="#555" filter="url(#sSoft)" />
    <rect x="30" y="12" width="1053" height="1050" filter="url(#sGrain)" opacity=".1" />
    <g filter="url(#sMid)" stroke="#4b4b4b" strokeWidth="5" opacity=".7">
      <path d="M510 850Q600 770 720 770T900 785T1010 755M440 700Q560 680 660 640M480 1010Q560 1000 640 960T760 860M980 900Q1040 930 1060 1000M960 940Q1020 930 1050 980M520 640Q600 620 640 640M640 870Q620 930 740 970" />
      <path d="M480 610Q530 700 560 760M210 450Q280 500 350 540M160 520Q240 570 350 570" />
    </g>
    <g stroke="#2a2a2a" strokeWidth="2" opacity=".6" filter="url(#sLine)">
      <path d="M240 520l100 30M250 540l90 20M270 500l70 25M150 560l150 50M180 570l120 30M200 590l100 20M230 840l90 40M240 855l70 30M250 830l90 40M240 870l80 20M560 740l20 100M585 770l70-10M510 850l90-10M390 980l20 50 50 20" />
      <path d="M990 830V920H900V830" stroke="#222" />
      <path d="M905 830l40-10-5 20-30 15M905 880l60-5-30 45zM650 930l40-20-10 30M750 930l25 15" stroke="#000" strokeWidth="4" />
    </g>
    <g filter="url(#sEdge)">
      <path d="M296 0H1100V870L1073 828 1038 783 1018 763 898 713 788 673 658 613 548 558 438 488 358 418 323 378 306 318 293 248z" fill="url(#sUp)" />
    </g>
    <g clipPath="url(#sHigh)">
      <g filter="url(#sSoft)">
        <ellipse cx="350" cy="70" rx="85" ry="70" fill="#fff" />
        <ellipse cx="330" cy="280" rx="40" ry="60" fill="#d8d8d8" />
        <ellipse cx="700" cy="200" rx="200" ry="60" fill="#c9c9c9" opacity=".6" />
        <ellipse cx="1000" cy="160" rx="110" ry="80" fill="#b0b0b0" opacity=".7" />
      </g>
      <g filter="url(#sEdge)">
        <path d="M410 335L490 322 570 340 710 365 830 405 890 465 1100 490V650L1010 600 910 580 870 560 780 525 710 500 570 460 440 390z" fill="#757575" />
      </g>
      <g filter="url(#sLine)">
        <Dendrite s={[[420, 350], [530, 400], [640, 430], [720, 470]]} len={65} step={12} seed={201} c="#9c9c9c" w={16} o={0.75} />
        <Dendrite s={[[750, 440], [860, 520], [1070, 560]]} len={70} step={15} seed={207} c="#868686" w={14} o={0.7} />
        <path d="M300 315L390 325 410 380 340 350zM880 560L960 575 1060 640 1010 625 930 640 870 600z" fill="#4e4e4e" />
      </g>
      <rect x="280" y="12" width="803" height="850" filter="url(#sShade)" opacity=".28" />
      <g filter="url(#sGlow)" opacity=".5">
        <Dendrite s={[[300, 320], [400, 400], [500, 440], [700, 490]]} len={50} seed={300} c="#5a5a5a" w={12} depth={1} />
        <Dendrite s={[[545, 430], [440, 320], [430, 240], [360, 120]]} len={40} seed={310} c="#808080" w={12} depth={1} />
        <Dendrite s={[[685, 400], [710, 350], [720, 270], [650, 200]]} len={90} seed={330} c="#888" w={12} depth={1} />
        <Dendrite s={[[1083, 350], [930, 340], [900, 260], [760, 130]]} len={60} seed={360} c="#808080" w={12} depth={1} />
        <Dendrite s={[[1083, 650], [960, 590], [820, 510]]} len={60} seed={390} c="#5a5a5a" w={12} depth={1} />
      </g>
      <g filter="url(#sLine)">
        <Dendrite s={[[700, 500], [580, 470], [500, 440], [400, 400], [380, 340], [300, 320]]} len={50} step={17} seed={300} c="#505050" w={7} />
        <Dendrite s={[[545, 430], [520, 380], [440, 320], [430, 240], [370, 180], [360, 120]]} len={46} step={20} seed={310} c="#747474" w={6.5} />
        <Dendrite s={[[680, 420], [590, 400], [550, 310], [480, 240], [460, 150]]} len={45} step={30} seed={320} c="#787878" w={4.5} depth={1} />
        <Dendrite s={[[685, 400], [710, 350], [720, 270], [650, 200]]} len={90} step={22} seed={330} c="#787878" w={5.5} />
        <Dendrite s={[[720, 270], [620, 240], [540, 200]]} len={50} step={24} seed={335} c="#8c8c8c" w={4.5} depth={1} />
        <Dendrite s={[[850, 15], [790, 25], [640, 75], [500, 60], [420, 50]]} len={45} step={30} seed={340} c="#8c8c8c" w={4.5} depth={1} />
        <Dendrite s={[[1083, 80], [1010, 70], [940, 10]]} len={46} step={14} seed={350} c="#606060" w={7} />
        <Dendrite s={[[1083, 350], [1000, 370], [930, 340]]} len={40} step={18} seed={360} c="#585858" w={6} />
        <Dendrite s={[[930, 340], [900, 260], [810, 230], [760, 130]]} len={50} step={34} seed={365} c="#757575" w={4} depth={1} />
        <path d="M960 130L965 200 905 250M870 60L850 110 760 140" stroke="#959595" strokeWidth="3" />
        <Dendrite s={[[650, 610], [635, 570], [622, 530]]} len={45} step={13} seed={370} c="#363636" w={8} depth={1} />
        <Dendrite s={[[900, 705], [870, 660], [800, 640]]} len={55} step={16} seed={380} c="#303030" w={8} depth={1} />
        <Dendrite s={[[1083, 660], [960, 590], [880, 570], [820, 510]]} len={60} step={16} seed={390} c="#505050" w={7} />
        <Dendrite s={[[1070, 770], [1010, 740], [970, 670]]} len={46} step={13} seed={400} c="#404040" w={7} />
        <Dendrite s={[[1083, 130], [1040, 100]]} len={40} step={14} seed={410} c="#707070" w={5} depth={1} />
        <Dendrite s={[[560, 560], [520, 500], [450, 470]]} len={40} step={20} seed={420} c="#707070" w={5} depth={1} />
        <Dendrite s={[[780, 660], [740, 590], [690, 560]]} len={45} step={20} seed={430} c="#666" w={5} depth={1} />
        <path d="M590 400L680 420 740 480 780 530 850 560" stroke="#333" strokeWidth="5" />
        <path d="M870 460L960 470 1083 485M710 350L800 390 830 420" stroke="#606060" strokeWidth="5" />
        <path d="M295 185H380" stroke="#555" strokeWidth="5" />
      </g>
      <path d="M760 334L855 301M915 287L980 269M1042 255L1065 250M603 110h12M678 205l4 5" stroke="#fff" strokeWidth="3" strokeDasharray="10 6" />
      <path d="M585 350L660 400 740 465 800 505 880 560 920 610 965 660" stroke="#e2e2e2" strokeWidth="3" strokeDasharray="12 30" />
      <path d="M706 480l4-8M716 486l8 1" stroke="#f4f4f4" strokeWidth="5" />
    </g>
    <path d="M284 240L300 320 320 375 360 420 430 485 540 553 650 608 780 668 890 708 1010 757" stroke="#272727" strokeWidth="4" filter="url(#sLine)" />
    <g filter="url(#sBank)">
      <path d="M30 272L80 256 120 258 160 278 225 315" stroke="#000" strokeWidth="7" />
      <path d="M222 318L195 375 120 470 60 540 38 600" stroke="#8d8d8d" strokeWidth="4" />
      <path d={RIVER} stroke="#a0a0a0" strokeWidth="59" />
      <path d={RIVER} stroke="#4c4c4c" strokeWidth="53" />
      <path d={RIVER} stroke="#2a2a2a" strokeWidth="41" />
      <path d="M120 640L190 635 260 628" stroke="#bcbcbc" strokeWidth="3" />
      <path d="M120 655Q190 640 250 640L180 670 130 675z" fill="#4e4e4e" />
      <path d="M130 700L155 765M145 850Q170 910 240 920L300 915 360 895" stroke="#9a9a9a" strokeWidth="3" />
      <path d="M140 820Q160 800 190 805L175 816z" fill="#666" stroke="#aaa" strokeWidth="2" />
    </g>
    <path d="M272 70h14v20h-14zM274 115h12v45h-12z" fill="#ddd" />
    <path d="M30 935l12-20 8-14 12-2 10-20 20 4" stroke="#0a0a0a" strokeWidth="4" />
    <path d="M100 730l6 5M101 438h2M166 766l4 3" stroke="#f0f0f0" strokeWidth="6" />
    <path d="M195 20V290M110 240L140 180 135 110" stroke="#5a5a5a" strokeWidth="2" opacity=".6" />
    <path d="M30 290L75 298" stroke="#000" strokeWidth="3" />
  </svg>
);

/* ---------- data ---------- */

const menus: [string, number][] = [
  ["File", 34], ["Edit", 36], ["View", 41], ["Bookmarks", 75], ["Insert", 45],
  ["Selection", 64], ["Geoprocessing", 94], ["Customize", 72], ["Windows", 65], ["Help", 40],
];
const layers = [
  { name: "ned19_n30x75_w091x25_la", high: "57.2158", low: "4.38852", selected: true },
  { name: "ned19_n30x50_w091x25_la", high: "32.3556", low: "1.17549e-038", selected: false },
];
const toolboxes = [
  "3D Analyst Tools", "Analysis Tools", "Cartography Tools", "Conversion Tools", "Data Interoperability Tools",
  "Data Management Tools", "Editing Tools", "Geocoding Tools", "Geostatistical Analyst Tools",
  "Linear Referencing Tools", "Multidimension Tools", "Network Analyst Tools", "Parcel Fabric Tools",
  "Schematics Tools", "Server Tools", "Space Time Pattern Mining Tools", "Spatial Analyst Tools",
  "Spatial Statistics Tools", "Tracking Analyst Tools",
];

const Tools = ({ icons }: { icons: React.ComponentType[] }) => (
  <>{icons.map((I, i) => <ToolButton key={i}><I /></ToolButton>)}</>
);

export default function App() {
  return (
    <Window>
      <GlobalStyle />
      <TitleBar>
        <LogoIcon />
        <TitleText>Untitled - ArcMap</TitleText>
        <WindowButtons>
          <Icon><path d="M2 8.500h10" stroke="#999" /></Icon>
          <Icon><path d="M1.500 5.500h7v7h-7zM3.500 5V3.500h7v7H9" stroke="#999" /></Icon>
          <Icon><path d="M1 3l10 10M11 3L1 13" stroke="#999" strokeWidth="1.100" /></Icon>
        </WindowButtons>
      </TitleBar>
      <MenuBar>
        {menus.map(([label, w]) => <MenuItem key={label} $w={w}>{label}</MenuItem>)}
      </MenuBar>
      <ToolbarRow>
        <Toolbar>
          <Grip />
          <Tools icons={[NewIcon, OpenIcon, SaveIcon, PrintIcon]} />
          <Separator />
          <Tools icons={[CutIcon, CopyIcon, PasteIcon, DeleteIcon]} />
          <Separator />
          <Tools icons={[UndoIcon, RedoIcon]} />
          <Separator />
          <ToolButton><AddDataIcon /></ToolButton>
          <ToolButton $w={10}><Caret /></ToolButton>
          <Combo>1:300,000<Chevron dir="down" w={1.2} /></Combo>
          <Separator />
          <Tools icons={[EditorIcon]} />
          <Separator />
          <Tools icons={[TocWinIcon, CatalogIcon, SearchWinIcon, ToolboxWinIcon, PythonIcon]} />
          <Separator />
          <Tools icons={[ModelIcon]} />
        </Toolbar>
        <Overflow><OverflowGlyph /></Overflow>
      </ToolbarRow>
      <ToolbarRow>
        <Toolbar>
          <Grip />
          <Tools icons={[ZoomInIcon, ZoomOutIcon]} />
          <ToolButton $on><HandIcon /></ToolButton>
          <Tools icons={[GlobeIcon]} />
          <Separator />
          <Tools icons={[FixedInIcon, FixedOutIcon]} />
          <Separator />
          <ToolButton><ArrowIcon /></ToolButton>
          <ToolButton><ArrowIcon right /></ToolButton>
          <Separator />
          <ToolButton><SelectFeatIcon /></ToolButton>
          <ToolButton $w={11}><Caret color="#999" /></ToolButton>
          <Tools icons={[ClearSelIcon]} />
          <Separator />
          <Tools icons={[PointerIcon]} />
          <Separator />
          <Tools icons={[IdentifyIcon, BoltIcon, PopupIcon]} />
          <Separator />
          <Tools icons={[MeasureIcon]} />
          <Separator />
          <Tools icons={[FindIcon, RouteIcon, XyIcon]} />
          <Separator />
          <Tools icons={[TimeIcon]} />
          <Separator />
          <Tools icons={[ViewerIcon]} />
        </Toolbar>
        <Overflow><OverflowGlyph /></Overflow>
      </ToolbarRow>

      <Workspace>
        <TocPanel>
          <PanelHeader><PanelTitle>Table Of Contents</PanelTitle><PinIcon /><CloseIcon /></PanelHeader>
          <TocTools>
            <ToolButton $on><ListOrderIcon /></ToolButton>
            <Tools icons={[SourceIcon, VisibleIcon, SelectedIcon]} />
            <Separator />
            <Tools icons={[OptionsIcon]} />
          </TocTools>
          <TocBox>
            <TocTree>
              <TocRow $indent={7}>
                <ExpandBox><MinusGlyph /></ExpandBox>
                <ToolButton $w={27}><LayersIcon /></ToolButton>
                <LayersLabel>Layers</LayersLabel>
              </TocRow>
              {layers.map((l) => (
                <LayerGroup key={l.name}>
                  <TocRow $indent={26}>
                    <ExpandBox><MinusGlyph /></ExpandBox>
                    <CheckBox><CheckGlyph /></CheckBox>
                    <LayerName $selected={l.selected}>{l.name}</LayerName>
                  </TocRow>
                  <ValueLabel>Value</ValueLabel>
                  <RampRow>
                    <Ramp />
                    <RampLabels><span>High : {l.high}</span><span>Low : {l.low}</span></RampLabels>
                  </RampRow>
                </LayerGroup>
              ))}
            </TocTree>
            <ScrollH $h={15}>
              <ScrollArrow $w={17} $h={15}><Chevron dir="left" /></ScrollArrow>
              <Thumb $w={102} />
              <Filler />
              <ScrollArrow $w={17} $h={15}><Chevron dir="right" /></ScrollArrow>
            </ScrollH>
          </TocBox>
        </TocPanel>

        <MapFrame>
          <MapRow>
            <MapCanvas><NorthRaster /><SouthRaster /></MapCanvas>
            <ScrollV>
              <ScrollArrow $w={14} $h={17}><Chevron dir="up" /></ScrollArrow>
              <Thumb $h={865} />
              <ScrollArrow $w={14} $h={17}><Chevron dir="down" /></ScrollArrow>
            </ScrollV>
          </MapRow>
          <MapFooter>
            <ViewButton $on>
              <svg width="9" height="9" viewBox="0 0 9 9"><path d="M.5.5h8v8h-8z" fill="#b9d488" stroke="#222" /><path d="M2 7L7 2v3L5 7z" fill="#4e8aa0" /></svg>
            </ViewButton>
            <ViewButton>
              <svg width="8" height="9" viewBox="0 0 8 9"><path d="M.5.5h5l2 2v6h-7z" fill="#fff" stroke="#222" /><path d="M2 4h3v1H2zM3 6h3v1H3z" fill="#2f7fc0" /></svg>
            </ViewButton>
            <FooterRule />
            <ViewButton>
              <svg width="10" height="9" viewBox="0 0 10 9" fill="none"><path d="M1 4Q2 1 5 1q2 0 3 1.500M9 5Q8 8 5 8 3 8 2 6.500" stroke="#1b4f8f" strokeWidth="1.300" /><path d="M9.500.5v3.500H6zM.5 8.500V5H4z" fill="#1b4f8f" /></svg>
            </ViewButton>
            <ViewButton>
              <svg width="6" height="7" viewBox="0 0 6 7"><path d="M0 0h2v7H0zM4 0h2v7H4z" fill="#1f56b3" /></svg>
            </ViewButton>
            <ScrollArrow $w={17} $h={15}><Chevron dir="left" /></ScrollArrow>
            <Thumb $w={1259} $h={14} />
            <ScrollArrow $w={18} $h={15}><Chevron dir="right" /></ScrollArrow>
          </MapFooter>
        </MapFrame>

        <ToolboxPanel>
          <PanelHeader><PanelTitle>ArcToolbox</PanelTitle><PinIcon /><CloseIcon /></PanelHeader>
          <ToolboxTree>
            <ToolboxRoot><FolderBoxIcon /><RootLabel>ArcToolbox</RootLabel></ToolboxRoot>
            {toolboxes.map((t) => (
              <ToolRow key={t}>
                <ExpandBox><MinusGlyph plus /></ExpandBox>
                <ToolboxIcon scroll={t.startsWith("Space Time")} />
                <ToolName>{t}</ToolName>
              </ToolRow>
            ))}
          </ToolboxTree>
        </ToolboxPanel>

        <DockStrip>
          <DockTab $h={72}><CatalogIcon /><DockLabel>Catalog</DockLabel></DockTab>
          <DockTab $h={68}><SearchWinIcon /><DockLabel>Search</DockLabel></DockTab>
        </DockStrip>
      </Workspace>

      <StatusBar>
        <StatusCell $w={1642} />
        <StatusCell $w={21} />
        <StatusCell $w={257}>-91.59  30.843 Decimal Degrees</StatusCell>
      </StatusBar>
    </Window>
  );
}
